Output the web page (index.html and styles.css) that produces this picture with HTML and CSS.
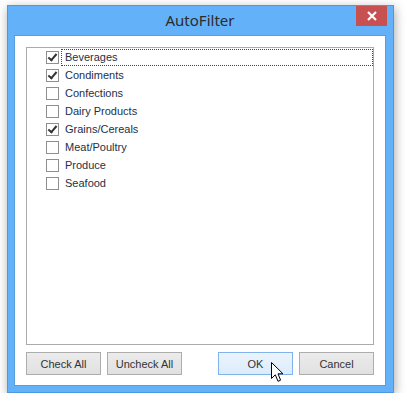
FILE: index.html
```html
<!DOCTYPE html>
<html lang="en">
<head>
    <meta charset="UTF-8">
    <title>AutoFilter</title>
    <link rel="stylesheet" href="styles.css">
</head>
<body>
    <div class="window">
        <div class="titlebar">
            <span></span>
            <span class="title">AutoFilter</span>
            <button class="close-btn">
                <svg width="10" height="10" viewBox="0 0 10 10"><path d="M1 1 L9 9 M9 1 L1 9" stroke="#fff" stroke-width="2.2"/></svg>
            </button>
        </div>

        <div class="client">
            <ul class="filter-list">
                <li class="item focused"><span class="box checked"></span><span class="label">Beverages</span></li>
                <li class="item"><span class="box checked"></span><span class="label">Condiments</span></li>
                <li class="item"><span class="box"></span><span class="label">Confections</span></li>
                <li class="item"><span class="box"></span><span class="label">Dairy Products</span></li>
                <li class="item"><span class="box checked"></span><span class="label">Grains/Cereals</span></li>
                <li class="item"><span class="box"></span><span class="label">Meat/Poultry</span></li>
                <li class="item"><span class="box"></span><span class="label">Produce</span></li>
                <li class="item"><span class="box"></span><span class="label">Seafood</span></li>
            </ul>

            <div class="buttons">
                <div class="group">
                    <button class="btn">Check All</button>
                    <button class="btn">Uncheck All</button>
                </div>
                <div class="group">
                    <button class="btn btn-hover">OK
                        <svg class="cursor" width="14" height="21" viewBox="0 0 14 21"><path d="M0.5 0.5 L0.5 16.5 L4.3 12.8 L7 19.3 L9.6 18.2 L7 11.8 L12 11.8 Z" fill="#fff" stroke="#000" stroke-width="1" stroke-linejoin="miter"/></svg>
                    </button>
                    <button class="btn">Cancel</button>
                </div>
            </div>
        </div>
    </div>
</body>
</html>
```

FILE: styles.css
```css
/* Pagina */
body {
    margin: 0;
    background: #fff;
    font-family: "Liberation Sans", Arial, sans-serif;
}

/* Ventana */
.window {
    margin: 5px 0 0 7px;
    width: 372px;
    height: 380px;
    background: #63b1f9;
    border: 1px solid #4c98e2;
    box-shadow: 1px 3px 10px rgba(0, 0, 0, 0.35);
    padding: 0 7px 6px 6px;
    display: flex;
    flex-direction: column;
}

.titlebar {
    height: 29px;
    display: grid;
    grid-template-columns: 1fr auto 1fr;
    align-items: start;
}

.title {
    font-family: "Noto Sans", "Open Sans", sans-serif;
    font-size: 15px;
    color: #2b2b2b;
    line-height: 29px;
}

.close-btn {
    justify-self: end;
    margin-right: -1px;
    width: 31px;
    height: 20px;
    border: none;
    background: #c75050;
    padding: 0;
    display: flex;
    align-items: center;
    justify-content: center;
}

/* Area de cliente */
.client {
    flex: 1;
    background: #fff;
    border: 1px solid #5a9ee0;
    padding: 11px 11px 10px 11px;
    display: flex;
    flex-direction: column;
}

.filter-list {
    list-style: none;
    margin: 0;
    padding: 0 0 0 19px;
    height: 296px;
    border: 1px solid #ababab;
}

.item {
    height: 18px;
    display: flex;
    align-items: center;
}

.box {
    width: 11px;
    height: 11px;
    border: 1px solid #8e8f8f;
    background: #fff;
    margin-right: 2px;
    flex: none;
    position: relative;
}

.box.checked::after {
    content: "";
    position: absolute;
    left: 3px;
    top: 0px;
    width: 3px;
    height: 7px;
    border: solid #333;
    border-width: 0 2px 2px 0;
    transform: rotate(40deg);
}

.label {
    flex: 1;
    font-size: 11px;
    color: #1e2f47;
    height: 17px;
    line-height: 15px;
    padding-left: 3px;
    border: 1px dotted transparent;
    box-sizing: border-box;
}

.focused .label {
    border-color: #444;
}

/* Botones */
.buttons {
    margin-top: 7px;
    display: flex;
    justify-content: space-between;
}

.group {
    display: flex;
    gap: 6px;
}

.btn {
    width: 75px;
    height: 23px;
    font-family: "Liberation Sans", Arial, sans-serif;
    font-size: 11px;
    color: #333;
    background: linear-gradient(#ececec, #e0e0e0);
    border: 1px solid #adadad;
    padding: 0;
}

.btn-hover {
    position: relative;
    background: linear-gradient(#ecf4fc, #dcecfc);
    border-color: #7eb4ea;
}

.cursor {
    position: absolute;
    left: 52px;
    top: 9px;
}
```
